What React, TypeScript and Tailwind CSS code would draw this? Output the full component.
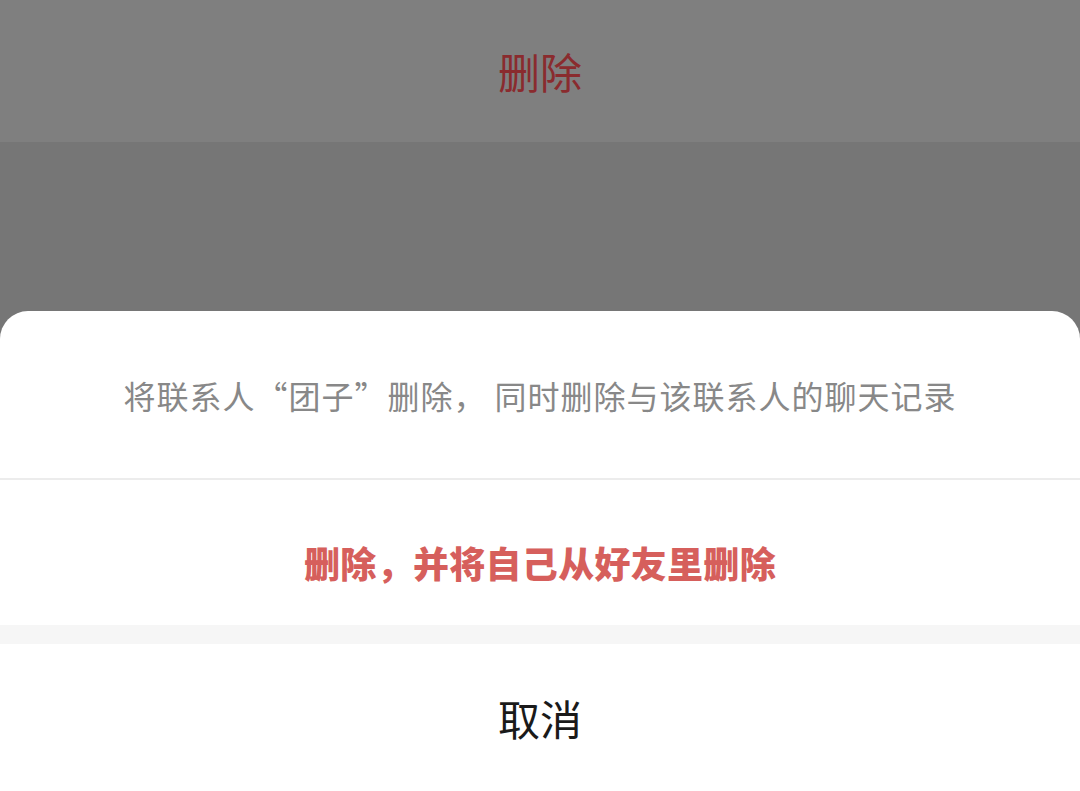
export default function App() {
  return (
    <div
      className="w-[1080px] h-[791px] overflow-hidden flex flex-col bg-[#767676]"
      style={{ fontFamily: '"Noto Sans CJK SC", "Noto Sans", sans-serif' }}
    >
      {/* Dimmed page behind the sheet */}
      <div className="h-[142px] bg-[#7f7f7f] flex items-center justify-center">
        <span className="text-[42px] leading-none text-[#8a2b2e]">删除</span>
      </div>
      <div className="h-[169px] bg-[#767676]" />

      {/* Action sheet */}
      <div className="flex-1 bg-white rounded-t-[28px] flex flex-col">
        <div className="h-[169px] flex items-center justify-center border-b-2 border-[#ececec]">
          <p className="text-[32px] leading-none text-[#888888] tracking-[1px]">
            将联系人“团子”删除， 同时删除与该联系人的聊天记录
          </p>
        </div>
        <div className="h-[145px] flex items-center justify-center pt-[18px]">
          <span className="text-[36px] leading-none font-black text-[#d65f5c] tracking-[0.3px]">
            删除，并将自己从好友里删除
          </span>
        </div>
        <div className="h-[19px] bg-[#f6f6f6]" />
        <div className="flex-1 flex items-center justify-center">
          <span className="text-[42px] leading-none text-[#1a1a1a]">取消</span>
        </div>
      </div>
    </div>
  );
}
